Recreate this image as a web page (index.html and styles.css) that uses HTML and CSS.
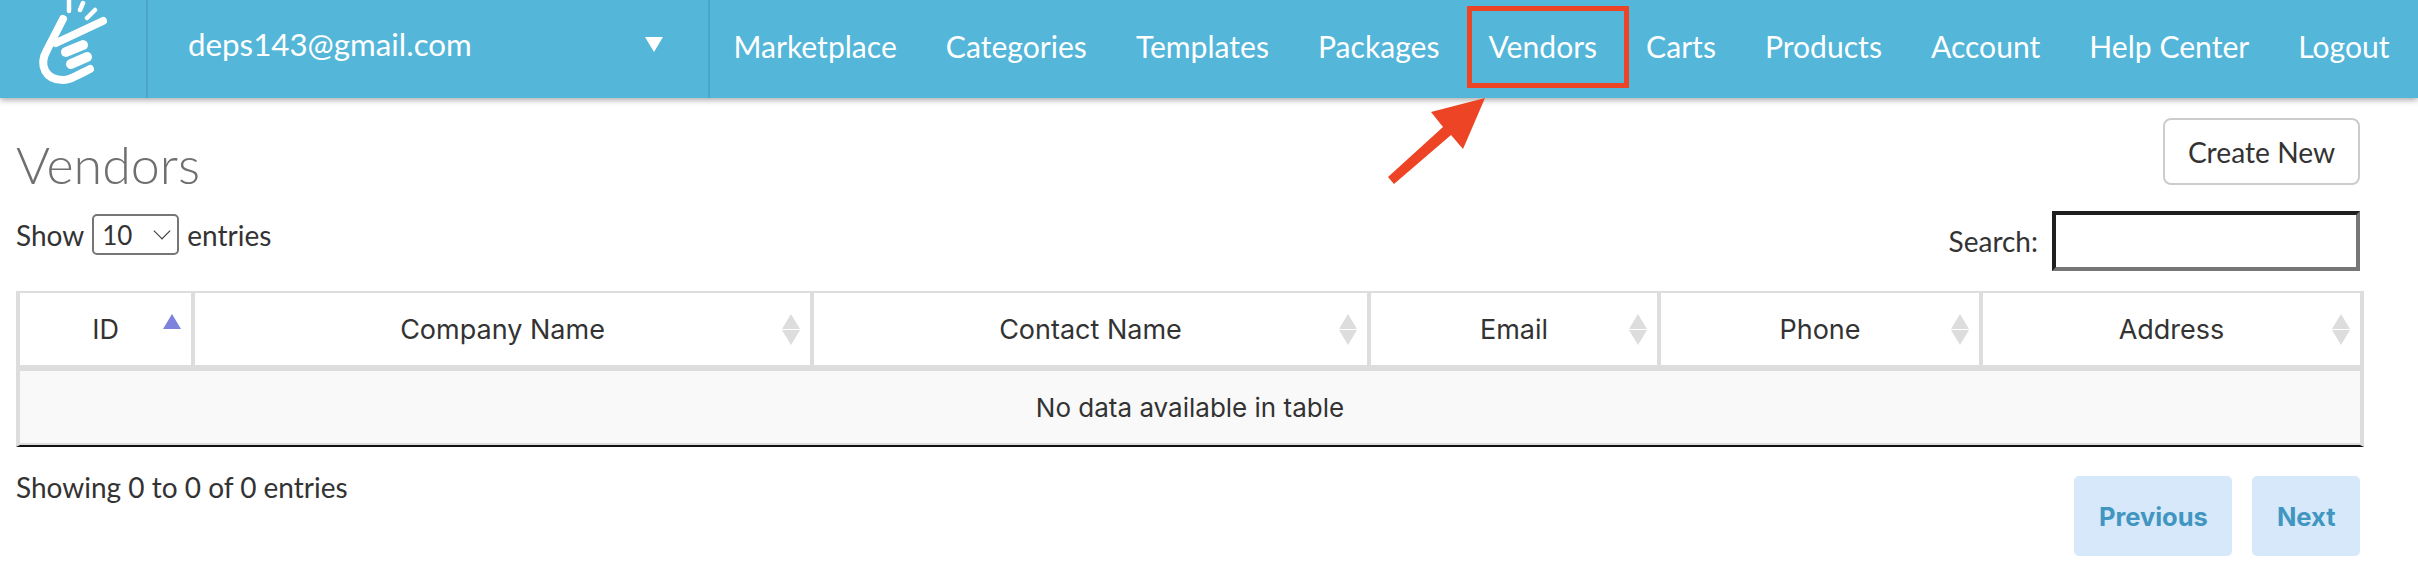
FILE: index.html
```html
<!DOCTYPE html>
<html lang="en">

<head>
    <meta charset="UTF-8">
    <meta name="viewport" content="width=device-width, initial-scale=1.0">
    <title>Vendors</title>
    <link rel="stylesheet" href="styles.css">
</head>

<body>
    <header class="topbar">
        <a class="logo" href="#" aria-label="Home">
            <svg width="146" height="98" viewBox="0 0 146 98" fill="none" stroke="#fff" stroke-linecap="round" stroke-linejoin="round">
                <path d="M69 -2V11M83 3L80 10M95 10L87 18" stroke-width="4.5" />
                <path d="M63 19L47 50C38 66 46 80 63 80C69 80 72 78 90 69" stroke-width="8" />
                <path d="M103 21L56 43" stroke-width="8" />
                <path d="M66 52L83 45M71 64L87 57" stroke-width="10" />
            </svg>
        </a>
        <div class="account">
            <span class="account-email">deps143@gmail.com</span>
            <span class="account-caret"></span>
        </div>
        <nav class="nav">
            <a href="#">Marketplace</a>
            <a href="#">Categories</a>
            <a href="#">Templates</a>
            <a href="#">Packages</a>
            <a href="#">Vendors</a>
            <a href="#">Carts</a>
            <a href="#">Products</a>
            <a href="#">Account</a>
            <a href="#">Help Center</a>
            <a href="#">Logout</a>
        </nav>
    </header>

    <main class="content">
        <div class="title-row">
            <h1>Vendors</h1>
            <button class="btn-create" type="button">Create New</button>
        </div>

        <div class="toolbar">
            <label class="length">
                Show
                <span class="select-wrap">
                    <select>
                        <option>10</option>
                        <option>25</option>
                        <option>50</option>
                        <option>100</option>
                    </select>
                </span>
                entries
            </label>
            <label class="search">
                Search:
                <input type="search">
            </label>
        </div>

        <table class="vendors">
            <thead>
                <tr>
                    <th class="col-id sorted">ID</th>
                    <th class="col-company">Company Name</th>
                    <th class="col-contact">Contact Name</th>
                    <th class="col-email">Email</th>
                    <th class="col-phone">Phone</th>
                    <th class="col-address">Address</th>
                </tr>
            </thead>
            <tbody>
                <tr>
                    <td colspan="6">No data available in table</td>
                </tr>
            </tbody>
        </table>

        <div class="table-footer">
            <div class="info">Showing 0 to 0 of 0 entries</div>
            <div class="paging">
                <a class="page-btn" href="#">Previous</a>
                <a class="page-btn" href="#">Next</a>
            </div>
        </div>
    </main>

    <!-- annotation drawn over the screenshot -->
    <div class="note-box"></div>
    <svg class="note-arrow" width="100" height="90" viewBox="0 0 100 90">
        <polygon fill="#ec4425" points="99,0 45,14 57,29 2,79 8,86 65,37 77,51" />
    </svg>
</body>

</html>
```

FILE: styles.css
```css
body {
    margin: 0;
    background-color: #fff;
    color: #333;
    font-family: 'Lato', sans-serif;
    font-size: 28px;
}

/* top bar */
.topbar {
    display: flex;
    height: 98px;
    background-color: #54b6d9;
    box-shadow: 0 2px 6px rgba(0, 0, 0, 0.35);
}

.logo {
    display: block;
    width: 146px;
    height: 98px;
    border-right: 2px solid #4aa5c6;
    overflow: hidden;
}

.account {
    display: flex;
    align-items: center;
    justify-content: space-between;
    width: 562px;
    padding: 0 45px 10px 40px;
    box-sizing: border-box;
    border-right: 2px solid #4aa5c6;
    color: #fff;
    font-size: 31.3px;
}

.account-caret {
    width: 0;
    height: 0;
    border-left: 9px solid transparent;
    border-right: 9px solid transparent;
    border-top: 15px solid #fff;
}

.nav {
    display: flex;
    align-items: center;
    margin-left: -1px;
    padding-bottom: 6px;
}

.nav a {
    padding: 0 24.5px;
    color: #fff;
    font-size: 30.1px;
    text-decoration: none;
}

/* page content */
.content {
    padding: 20px 54px 0 16px;
}

.title-row {
    display: flex;
    align-items: flex-start;
    justify-content: space-between;
    height: 67px;
}

h1 {
    margin: 18px 0 0;
    color: #6f6f6f;
    font-size: 52px;
    font-weight: 300;
    line-height: 56px;
}

.btn-create {
    width: 197px;
    height: 67px;
    margin-right: 4px;
    background-color: #fff;
    border: 2px solid #ccc;
    border-radius: 8px;
    color: #333;
    font-family: inherit;
    font-size: 28.2px;
}

.toolbar {
    display: flex;
    align-items: flex-start;
    justify-content: space-between;
    margin-top: 26px;
    padding-right: 4px;
}

.length {
    display: flex;
    align-items: center;
    gap: 8px;
    margin-top: 3px;
}

.select-wrap {
    position: relative;
    display: block;
}

.select-wrap::after {
    content: "";
    position: absolute;
    top: 11px;
    right: 11px;
    width: 11px;
    height: 11px;
    border-right: 1.5px solid #333;
    border-bottom: 1.5px solid #333;
    transform: rotate(45deg);
}

select {
    display: block;
    width: 87px;
    height: 41px;
    padding: 0 0 0 8px;
    appearance: none;
    background-color: #fff;
    border: 2px solid #767676;
    border-radius: 5px;
    color: #333;
    font-family: inherit;
    font-size: 26px;
}

.search {
    display: flex;
    align-items: center;
    gap: 14px;
}

input {
    width: 308px;
    height: 60px;
    padding: 0;
    box-sizing: border-box;
    border: 4px solid;
    border-color: #1f1f1f #767676 #767676 #1f1f1f;
    background-color: #fff;
}

/* table */
.vendors {
    width: 2348px;
    margin-top: 20px;
    box-sizing: border-box;
    border-collapse: separate;
    border-spacing: 0;
    table-layout: fixed;
    border-top: 2px solid #ddd;
    border-left: 4px solid #ddd;
    border-right: 4px solid #ddd;
    border-bottom: 2px solid #111;
    font-family: 'Inter', sans-serif;
}

th {
    position: relative;
    box-sizing: border-box;
    height: 78px;
    padding: 0;
    border-right: 4px solid #ddd;
    border-bottom: 6px solid #ddd;
    font-size: 27px;
    font-weight: 400;
}

th:last-child {
    border-right: none;
}

th::before,
th::after {
    content: "";
    position: absolute;
    right: 10px;
    width: 0;
    height: 0;
    border-left: 9px solid transparent;
    border-right: 9px solid transparent;
}

th::before {
    top: 21px;
    border-bottom: 15px solid #ddd;
}

th::after {
    top: 37px;
    border-top: 15px solid #ddd;
}

th.sorted::before {
    border-bottom-color: #7d83dc;
}

th.sorted::after {
    display: none;
}

.col-id {
    width: 175px;
}

.col-company {
    width: 619px;
}

.col-contact {
    width: 557px;
}

.col-email {
    width: 290px;
}

.col-phone {
    width: 322px;
}

td {
    box-sizing: border-box;
    height: 74px;
    padding: 0;
    background-color: #f9f9f9;
    border-bottom: 2px solid #ddd;
    font-size: 26px;
    text-align: center;
}

.table-footer {
    display: flex;
    align-items: flex-start;
    justify-content: space-between;
    margin-top: 29px;
    padding-right: 4px;
}

.info {
    margin-top: -6px;
}

.paging {
    display: flex;
    gap: 20px;
}

.page-btn {
    display: flex;
    align-items: center;
    height: 80px;
    padding: 0 24.5px;
    background-color: #d6e8fa;
    border-radius: 5px;
    color: #4096c0;
    font-family: 'Inter', sans-serif;
    font-size: 25.5px;
    font-weight: 700;
    text-decoration: none;
}

/* red annotation */
.note-box {
    position: absolute;
    top: 6px;
    left: 1467px;
    width: 162px;
    height: 82px;
    box-sizing: border-box;
    border: 5px solid #ec4425;
}

.note-arrow {
    position: absolute;
    top: 98px;
    left: 1386px;
}
```
